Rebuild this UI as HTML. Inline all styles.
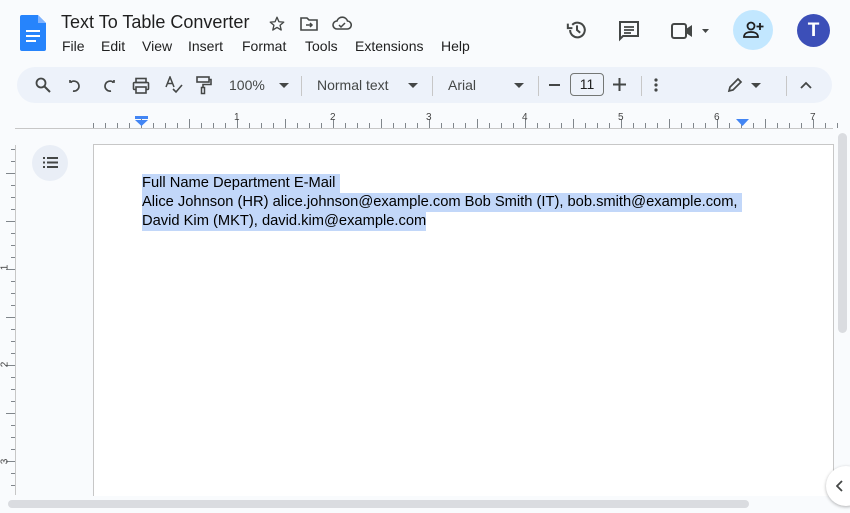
<!DOCTYPE html>
<html style="overflow:hidden;width:850px;height:513px"><head><meta charset="utf-8"><style>
*{margin:0;padding:0;box-sizing:border-box}
body{width:850px;height:513px;overflow:hidden;background:#f9fbfd;font-family:"Liberation Sans",Arial,sans-serif;position:relative;color:#1f1f1f}
.abs{position:absolute}
.menu span{position:absolute;top:38px;font-size:14px;color:#1f1f1f}
.tb{position:absolute;left:17px;top:67px;width:815px;height:36px;background:#edf2fa;border-radius:18px}
.tb .t{position:absolute;top:10px;font-size:14px;color:#444746}
.sep{position:absolute;top:9px;width:1px;height:20px;background:#c7c7c7}
svg{position:absolute}
.num{position:absolute;font-size:10px;color:#444;top:112px}
.vnum{position:absolute;font-size:10px;color:#444;left:2px;transform:rotate(-90deg)}
.sel{background:#c2d7f9}
</style></head><body>
<svg style="left:20px;top:15px" width="26" height="36" viewBox="0 0 26 36"><path d="M2 0h16l8 8v26a2 2 0 0 1-2 2H2a2 2 0 0 1-2-2V2a2 2 0 0 1 2-2z" fill="#2684fc"/><path d="M18 0v8h8z" fill="#a6c8ff" opacity=".7"/><rect x="6" y="15" width="14" height="2" fill="#fff"/><rect x="6" y="20" width="14" height="2" fill="#fff"/><rect x="6" y="25" width="10" height="2" fill="#fff"/></svg>
<div class="abs" style="left:61px;top:12px;font-size:18px;color:#1f1f1f">Text To Table Converter</div>
<svg style="left:268px;top:15px" width="18" height="18" viewBox="0 0 24 24"><path d="M12 3l2.6 6 6.4.5-4.9 4.2 1.5 6.3L12 16.6 6.4 20l1.5-6.3L3 9.5l6.4-.5z" fill="none" stroke="#444746" stroke-width="1.8" stroke-linejoin="round"/></svg>
<svg style="left:300px;top:16px" width="18" height="16" viewBox="0 0 18 16"><path d="M1 2h6l2 2h8v10H1z" fill="none" stroke="#444746" stroke-width="1.6"/><path d="M6 9h6M10 7l2 2-2 2" fill="none" stroke="#444746" stroke-width="1.5"/></svg>
<svg style="left:332px;top:16px" width="20" height="15" viewBox="0 0 20 15"><path d="M5 13h10a4 4 0 0 0 .5-8A5.5 5.5 0 0 0 5 5a4 4 0 0 0 0 8z" fill="none" stroke="#444746" stroke-width="1.6"/><path d="M7 9l2 2 4-4" fill="none" stroke="#444746" stroke-width="1.5"/></svg>
<div class="menu"><span style="left:62px">File</span><span style="left:101px">Edit</span><span style="left:142px">View</span><span style="left:188px">Insert</span><span style="left:242px">Format</span><span style="left:305px">Tools</span><span style="left:355px">Extensions</span><span style="left:441px">Help</span></div>
<svg style="left:566px;top:19px" width="22" height="22" viewBox="0 0 24 24"><path d="M4.5 12a8 8 0 1 0 2.3-5.6" fill="none" stroke="#444746" stroke-width="2.2"/><path d="M2 5v5h5" fill="none" stroke="#444746" stroke-width="2.2"/><path d="M12 7v5l3.5 3" fill="none" stroke="#444746" stroke-width="2.2"/></svg>
<svg style="left:618px;top:20px" width="22" height="22" viewBox="0 0 22 22"><path d="M2 2h18v14H5l-3 3z" fill="none" stroke="#444746" stroke-width="2"/><path d="M6 7h10M6 10h10M6 13h7" stroke="#444746" stroke-width="1.8"/></svg>
<svg style="left:671px;top:22px" width="42" height="18" viewBox="0 0 42 18"><rect x="1" y="2" width="14" height="14" rx="2" fill="none" stroke="#444746" stroke-width="2"/><path d="M15 7l6-4v12l-6-4z" fill="#444746"/><path d="M31 7h7l-3.5 4z" fill="#444746"/></svg>
<div class="abs" style="left:733px;top:10px;width:40px;height:40px;border-radius:50%;background:#c2e7ff"></div>
<svg style="left:743px;top:20px" width="22" height="20" viewBox="0 0 22 20"><circle cx="8" cy="6" r="3.5" fill="none" stroke="#1f1f1f" stroke-width="1.8"/><path d="M1 17c0-4 4-5 7-5s7 1 7 5z" fill="none" stroke="#1f1f1f" stroke-width="1.8"/><path d="M17 3v7M13.5 6.5h7" stroke="#1f1f1f" stroke-width="1.8"/></svg>
<div class="abs" style="left:797px;top:14px;width:33px;height:33px;border-radius:50%;background:#3c4fb8;color:#fff;font-weight:bold;font-size:19px;text-align:center;line-height:33px">T</div>
<div class="tb">
<svg style="left:18px;top:10px" width="16" height="16" viewBox="0 0 16 16"><circle cx="6" cy="6" r="4.5" fill="none" stroke="#444746" stroke-width="1.8"/><path d="M9.5 9.5L15 15" stroke="#444746" stroke-width="2"/></svg>
<svg style="left:51px;top:11px" width="16" height="16" viewBox="0 0 16 16"><path d="M4 4H2V2M2.5 4.5A5 5 0 1 1 5 13" fill="none" stroke="#444746" stroke-width="1.7"/></svg>
<svg style="left:83px;top:11px" width="16" height="16" viewBox="0 0 16 16"><path d="M12 4h2V2M13.5 4.5A5 5 0 1 0 11 13" fill="none" stroke="#444746" stroke-width="1.7"/></svg>
<svg style="left:115px;top:10px" width="18" height="18" viewBox="0 0 18 18"><rect x="4" y="1.5" width="10" height="4" fill="none" stroke="#444746" stroke-width="1.6"/><rect x="1.5" y="5.5" width="15" height="7" rx="1" fill="none" stroke="#444746" stroke-width="1.6"/><rect x="4" y="10" width="10" height="6" fill="#edf2fa" stroke="#444746" stroke-width="1.6"/></svg>
<svg style="left:148px;top:9px" width="18" height="18" viewBox="0 0 18 18"><path d="M1 11L5 1l4 10M2.5 7.5h5" fill="none" stroke="#444746" stroke-width="1.5"/><path d="M8 13l3 3 6-7" fill="none" stroke="#444746" stroke-width="1.6"/></svg>
<svg style="left:179px;top:9px" width="16" height="19" viewBox="0 0 16 19"><rect x="1" y="1" width="12" height="5" fill="none" stroke="#444746" stroke-width="1.6"/><path d="M13 3.5h2v5H7v3" fill="none" stroke="#444746" stroke-width="1.6"/><rect x="5.5" y="11.5" width="3" height="6" fill="none" stroke="#444746" stroke-width="1.5"/></svg>
<span class="t" style="left:212px">100%</span>
<svg style="left:262px;top:16px" width="10" height="5"><path d="M0 0h10L5 5z" fill="#444746"/></svg>
<div class="sep" style="left:284px"></div>
<span class="t" style="left:300px">Normal text</span>
<svg style="left:391px;top:16px" width="10" height="5"><path d="M0 0h10L5 5z" fill="#444746"/></svg>
<div class="sep" style="left:415px"></div>
<span class="t" style="left:431px">Arial</span>
<svg style="left:497px;top:16px" width="10" height="5"><path d="M0 0h10L5 5z" fill="#444746"/></svg>
<div class="sep" style="left:521px"></div>
<div class="abs" style="left:532px;top:17px;width:11px;height:2px;background:#444746"></div>
<div class="abs" style="left:553px;top:6px;width:34px;height:23px;border:1px solid #747775;border-radius:4px;font-size:14px;text-align:center;line-height:21px;color:#1f1f1f">11</div>
<svg style="left:596px;top:11px" width="13" height="13"><path d="M6.5 0v13M0 6.5h13" stroke="#444746" stroke-width="2"/></svg>
<div class="sep" style="left:624px"></div>
<svg style="left:637px;top:11px" width="4" height="14"><circle cx="2" cy="2" r="1.6" fill="#444746"/><circle cx="2" cy="7" r="1.6" fill="#444746"/><circle cx="2" cy="12" r="1.6" fill="#444746"/></svg>
<svg style="left:710px;top:10px" width="16" height="16" viewBox="0 0 16 16"><path d="M2 14l1-4 8-8 3 3-8 8z" fill="none" stroke="#444746" stroke-width="1.7"/></svg>
<svg style="left:734px;top:16px" width="10" height="5"><path d="M0 0h10L5 5z" fill="#444746"/></svg>
<div class="sep" style="left:769px"></div>
<svg style="left:783px;top:14px" width="12" height="8"><path d="M1 7l5-5 5 5" fill="none" stroke="#444746" stroke-width="1.8"/></svg>
</div>
<div class="abs" style="left:15px;top:128px;width:818px;height:1px;background:#c7c7c7"></div>
<div class="abs" style="left:93px;top:123px;width:745px;height:5px;background:repeating-linear-gradient(90deg,#80868b 0 1px,transparent 1px 12px)"></div>
<div class="abs" style="left:141px;top:119px;width:700px;height:9px;background:repeating-linear-gradient(90deg,#80868b 0 1px,transparent 1px 48px)"></div>
<span class="num" style="left:234px">1</span><span class="num" style="left:330px">2</span><span class="num" style="left:426px">3</span><span class="num" style="left:522px">4</span><span class="num" style="left:618px">5</span><span class="num" style="left:714px">6</span><span class="num" style="left:810px">7</span>
<svg style="left:135px;top:116px" width="13" height="10"><rect x="0" y="0" width="13" height="3" fill="#4285f4"/><path d="M0 4h13l-6.5 6z" fill="#4285f4"/></svg>
<svg style="left:736px;top:119px" width="13" height="8"><path d="M0 0h13l-6.5 7z" fill="#4285f4"/></svg>
<div class="abs" style="left:15px;top:145px;width:1px;height:350px;background:#c7c7c7"></div>
<div class="abs" style="left:11px;top:149px;width:4px;height:346px;background:repeating-linear-gradient(180deg,#80868b 0 1px,transparent 1px 12px)"></div>
<div class="abs" style="left:6px;top:173px;width:9px;height:322px;background:repeating-linear-gradient(180deg,#80868b 0 1px,transparent 1px 48px)"></div>
<span class="vnum" style="top:262px">1</span><span class="vnum" style="top:359px">2</span><span class="vnum" style="top:456px">3</span>
<div class="abs" style="left:32px;top:145px;width:36px;height:36px;border-radius:50%;background:#e9eef6"></div>
<svg style="left:43px;top:157px" width="15" height="11"><g fill="#444746"><rect x="0" y="0" width="2" height="2"/><rect x="4" y="0" width="11" height="2"/><rect x="0" y="4.5" width="2" height="2"/><rect x="4" y="4.5" width="11" height="2"/><rect x="0" y="9" width="2" height="2"/><rect x="4" y="9" width="11" height="2"/></g></svg>
<div class="abs" style="left:93px;top:144px;width:741px;height:360px;background:#fff;border:1px solid #c7c7c7"></div>
<div class="abs" style="left:142px;top:174px;font-size:14.7px;line-height:19px;color:#000;font-family:'Liberation Sans',Arial,sans-serif;white-space:nowrap">
<div style="height:19px"><span class="sel" style="display:inline-block;height:19px">Full Name Department E-Mail&nbsp; </span></div>
<div style="height:19px"><span class="sel" style="display:inline-block;height:19px">Alice Johnson (HR) alice.johnson@example.com Bob Smith (IT), bob.smith@example.com,&nbsp;</span></div>
<div style="height:19px"><span class="sel" style="display:inline-block;height:19px">David Kim (MKT), david.kim@example.com</span></div>
</div>
<div class="abs" style="left:838px;top:133px;width:9px;height:200px;border-radius:5px;background:#dadce0"></div>
<div class="abs" style="left:0;top:496px;width:850px;height:17px;background:#f9fbfd"></div>
<div class="abs" style="left:8px;top:500px;width:741px;height:8px;border-radius:4px;background:#dadce0"></div>
<div class="abs" style="left:826px;top:466px;width:40px;height:40px;border-radius:50%;background:#fff;box-shadow:0 1px 3px rgba(0,0,0,.3)"></div>
<svg style="left:836px;top:480px" width="8" height="12"><path d="M6 1L1 6l5 5" fill="none" stroke="#444746" stroke-width="1.8"/></svg>
</body></html>
